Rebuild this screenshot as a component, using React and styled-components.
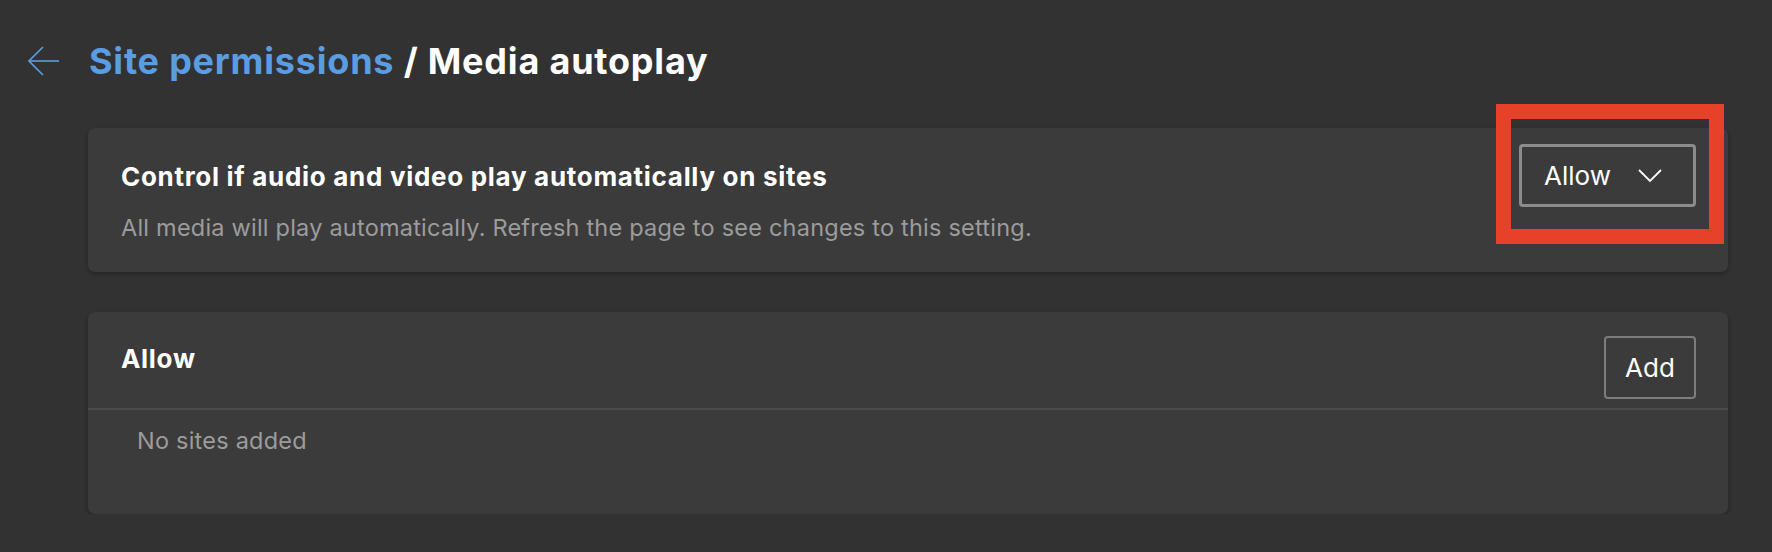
import styled, { createGlobalStyle } from "styled-components";

const GlobalStyle = createGlobalStyle`
  html, body {
    margin: 0;
    background: #323232;
    font-family: Inter, "Noto Sans", sans-serif;
    color: #ffffff;
  }
`;

const Page = styled.main`
  display: flex;
  flex-direction: column;
  padding: 40px 44px 0 28px;
`;

const Header = styled.header`
  display: flex;
  align-items: center;
  gap: 29px;
  height: 42px;
`;

const BackButton = styled.button`
  display: flex;
  align-items: center;
  padding: 0;
  border: none;
  background: none;
  color: #5b9de2;
  cursor: pointer;
`;

const Title = styled.h1`
  margin: 0;
  font-size: 36px;
  font-weight: 700;
  letter-spacing: 0.8px;
  line-height: 42px;

  a {
    color: #5b9de2;
    text-decoration: none;
  }
`;

const Content = styled.div`
  display: flex;
  flex-direction: column;
  gap: 40px;
  margin: 46px 0 0 60px;
`;

const Card = styled.section`
  background: #3b3b3b;
  border-radius: 7px;
  box-shadow: 0 2px 4px rgba(0, 0, 0, 0.28);
`;

const SettingRow = styled.div`
  display: flex;
  justify-content: space-between;
  align-items: flex-start;
  padding: 16px 32px 30px 33px;
`;

const SettingText = styled.div`
  display: flex;
  flex-direction: column;
  gap: 22px;
  padding-top: 18px;
`;

const CardTitle = styled.h2`
  margin: 0;
  font-size: 26px;
  font-weight: 700;
  line-height: 30px;
  letter-spacing: 0.7px;
`;

const Description = styled.p`
  margin: 0;
  font-size: 23.5px;
  line-height: 28px;
  color: #9c9c9c;
  letter-spacing: 0.22px;
`;

const Highlight = styled.div`
  position: relative;

  &::after {
    content: "";
    position: absolute;
    inset: -40px -28px -37px -23px;
    border: 15px solid #e8412a;
    pointer-events: none;
  }
`;

const Select = styled.button`
  display: flex;
  align-items: center;
  justify-content: space-between;
  box-sizing: border-box;
  width: 177px;
  height: 63px;
  padding: 0 31px 0 22px;
  background: #3b3b3b;
  border: 3px solid #8c8c8c;
  border-radius: 4px;
  color: #ffffff;
  font-family: Inter, "Noto Sans", sans-serif;
  font-size: 26px;
  cursor: pointer;
`;

const ListHeader = styled.div`
  display: flex;
  justify-content: space-between;
  align-items: flex-start;
  height: 96px;
  padding: 0 32px 0 33px;
  border-bottom: 2px solid #4a4a4a;
`;

const ListTitle = styled.h2`
  margin: 0;
  padding-top: 32px;
  font-size: 26px;
  font-weight: 700;
  line-height: 30px;
  letter-spacing: 0.7px;
`;

const OutlineButton = styled.button`
  box-sizing: border-box;
  width: 92px;
  height: 63px;
  margin-top: 24px;
  background: #3b3b3b;
  border: 2px solid #7d7d7d;
  border-radius: 4px;
  color: #ffffff;
  font-family: Inter, "Noto Sans", sans-serif;
  font-size: 26px;
  cursor: pointer;
`;

const EmptyState = styled.p`
  margin: 0;
  padding: 17px 49px 59px;
  font-size: 23.5px;
  line-height: 28px;
  color: #9c9c9c;
  letter-spacing: 0.22px;
`;

function ArrowLeft() {
  return (
    <svg width="32" height="30" viewBox="0 0 32 30" fill="none" stroke="currentColor" strokeWidth="1.6">
      <path d="M1 15 H31" />
      <path d="M15 1 L1 15 L15 29" />
    </svg>
  );
}

function Chevron() {
  return (
    <svg width="24" height="14" viewBox="0 0 24 14" fill="none" stroke="currentColor" strokeWidth="1.8">
      <path d="M1 1 L12 12 L23 1" />
    </svg>
  );
}

export default function App() {
  return (
    <>
      <GlobalStyle />
      <Page>
        <Header>
          <BackButton aria-label="Back">
            <ArrowLeft />
          </BackButton>
          <Title>
            <a href="#site-permissions">Site permissions</a> / Media autoplay
          </Title>
        </Header>

        <Content>
          <Card>
            <SettingRow>
              <SettingText>
                <CardTitle>Control if audio and video play automatically on sites</CardTitle>
                <Description>
                  All media will play automatically. Refresh the page to see changes to this setting.
                </Description>
              </SettingText>
              <Highlight>
                <Select>
                  Allow
                  <Chevron />
                </Select>
              </Highlight>
            </SettingRow>
          </Card>

          <Card>
            <ListHeader>
              <ListTitle>Allow</ListTitle>
              <OutlineButton>Add</OutlineButton>
            </ListHeader>
            <EmptyState>No sites added</EmptyState>
          </Card>
        </Content>
      </Page>
    </>
  );
}
